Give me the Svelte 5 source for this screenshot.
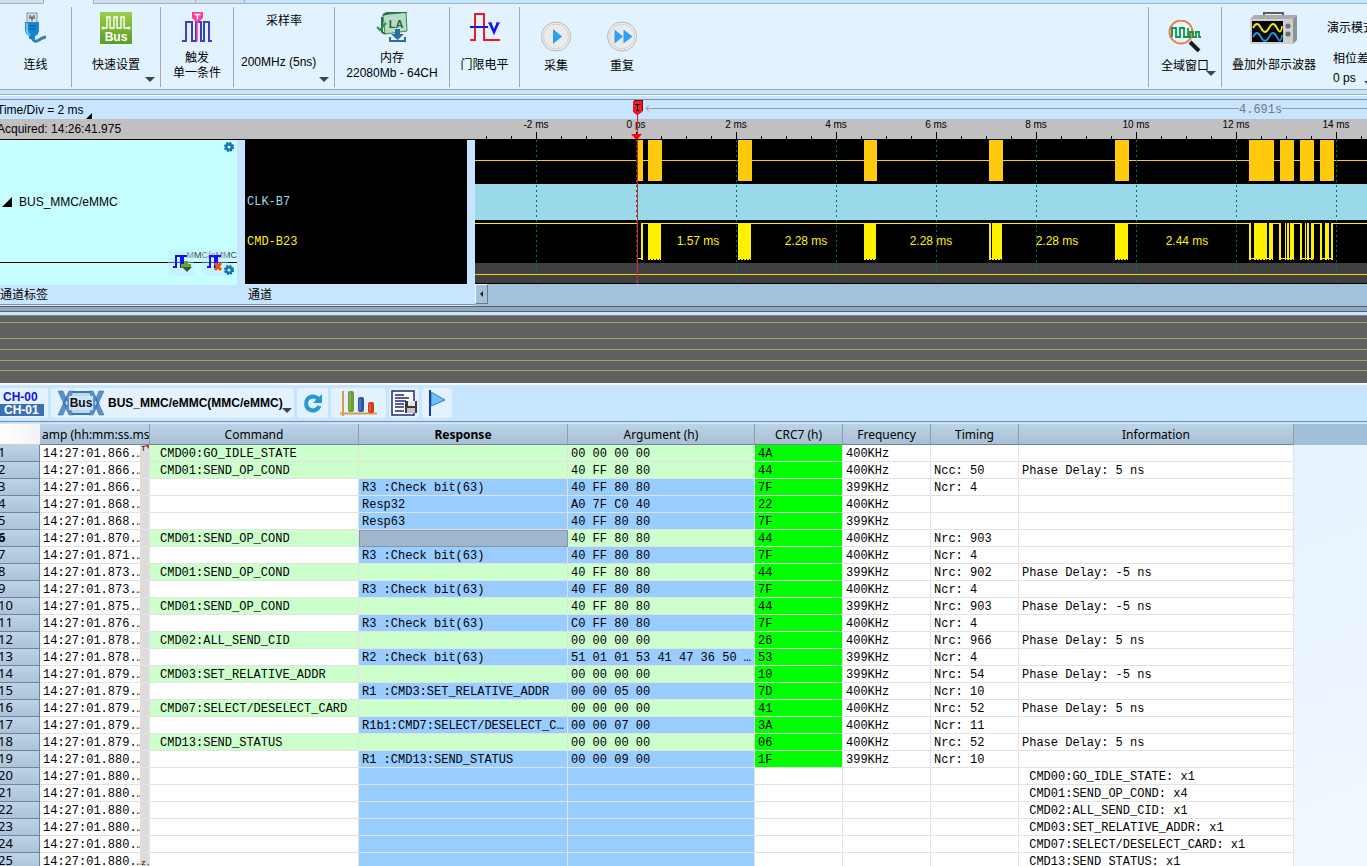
<script>
  /**
   * Logic analyzer main window: ribbon, waveform viewer, overview strip
   * and the MMC/eMMC protocol report.
   */

  const columns = ['Command', 'Response', 'Argument (h)', 'CRC7 (h)', 'Frequency', 'Timing', 'Information'];

  // [kind, ms, command, response, argument, crc, frequency, timing, info]
  const packets = [
    ['cmd', '866', 'CMD00:GO_IDLE_STATE', '', '00 00 00 00', '4A', '400KHz', '', ''],
    ['cmd', '866', 'CMD01:SEND_OP_COND', '', '40 FF 80 80', '44', '400KHz', 'Ncc: 50', 'Phase Delay: 5 ns'],
    ['resp', '866', '', 'R3 :Check bit(63)', '40 FF 80 80', '7F', '399KHz', 'Ncr: 4', ''],
    ['resp', '868', '', 'Resp32', 'A0 7F C0 40', '22', '400KHz', '', ''],
    ['resp', '868', '', 'Resp63', '40 FF 80 80', '7F', '399KHz', '', ''],
    ['cmd', '870', 'CMD01:SEND_OP_COND', '', '40 FF 80 80', '44', '400KHz', 'Nrc: 903', ''],
    ['resp', '871', '', 'R3 :Check bit(63)', '40 FF 80 80', '7F', '400KHz', 'Ncr: 4', ''],
    ['cmd', '873', 'CMD01:SEND_OP_COND', '', '40 FF 80 80', '44', '399KHz', 'Nrc: 902', 'Phase Delay: -5 ns'],
    ['resp', '873', '', 'R3 :Check bit(63)', '40 FF 80 80', '7F', '400KHz', 'Ncr: 4', ''],
    ['cmd', '875', 'CMD01:SEND_OP_COND', '', '40 FF 80 80', '44', '399KHz', 'Nrc: 903', 'Phase Delay: -5 ns'],
    ['resp', '876', '', 'R3 :Check bit(63)', 'C0 FF 80 80', '7F', '400KHz', 'Ncr: 4', ''],
    ['cmd', '878', 'CMD02:ALL_SEND_CID', '', '00 00 00 00', '26', '400KHz', 'Nrc: 966', 'Phase Delay: 5 ns'],
    ['resp', '878', '', 'R2 :Check bit(63)', '51 01 01 53 41 47 36 50 …', '53', '399KHz', 'Ncr: 4', ''],
    ['cmd', '879', 'CMD03:SET_RELATIVE_ADDR', '', '00 00 00 00', '10', '399KHz', 'Nrc: 54', 'Phase Delay: -5 ns'],
    ['resp', '879', '', 'R1 :CMD3:SET_RELATIVE_ADDR', '00 00 05 00', '7D', '400KHz', 'Ncr: 10', ''],
    ['cmd', '879', 'CMD07:SELECT/DESELECT_CARD', '', '00 00 00 00', '41', '400KHz', 'Nrc: 52', 'Phase Delay: 5 ns'],
    ['resp', '879', '', 'R1b1:CMD7:SELECT/DESELECT_C…', '00 00 07 00', '3A', '400KHz', 'Ncr: 11', ''],
    ['cmd', '879', 'CMD13:SEND_STATUS', '', '00 00 00 00', '06', '400KHz', 'Nrc: 52', 'Phase Delay: 5 ns'],
    ['resp', '880', '', 'R1 :CMD13:SEND_STATUS', '00 00 09 00', '1F', '399KHz', 'Ncr: 10', ''],
    ['sum', '880', '', '', '', '', '', '', ' CMD00:GO_IDLE_STATE: x1'],
    ['sum', '880', '', '', '', '', '', '', ' CMD01:SEND_OP_COND: x4'],
    ['sum', '880', '', '', '', '', '', '', ' CMD02:ALL_SEND_CID: x1'],
    ['sum', '880', '', '', '', '', '', '', ' CMD03:SET_RELATIVE_ADDR: x1'],
    ['sum', '880', '', '', '', '', '', '', ' CMD07:SELECT/DESELECT_CARD: x1'],
    ['sum', '880', '', '', '', '', '', '', ' CMD13:SEND_STATUS: x1']
  ];

  let selectedRow = $state(6);

  // waveform canvas: 50px per ms, trigger at ORIGIN
  const ORIGIN = 161;
  const majors = [-1, 0, 1, 2, 3, 4, 5, 6, 7].map((n) => ({
    x: ORIGIN + n * 100,
    label: n === 0 ? '0 ps' : `${n * 2} ms`
  }));
  const minors = Array.from({ length: 36 }, (_, i) => 11 + i * 25);

  const busBlocks = [[162, 6], [173, 14], [263, 14], [389, 13], [514, 14], [640, 14], [774, 25], [805, 14], [825, 14], [845, 14]];
  const cmdBlocks = [
    [166, 2], [173, 13], [263, 13], [389, 12], [514, 2], [517, 10], [640, 13],
    [774, 2], [779, 13], [794, 4],
    [804, 2], [810, 1], [812, 2], [815, 4],
    [825, 2], [830, 1], [832, 2], [836, 3],
    [845, 2], [850, 4], [856, 2]
  ];
  const cmdLow = [[162, 6], [514, 13], [774, 24], [804, 15], [825, 14], [845, 13]];
  const cmdHigh = [[0, 162], [166, 348], [517, 257], [798, 6], [819, 6], [839, 6], [858, 2000]];
  const gaps = [[223, '1.57 ms'], [331, '2.28 ms'], [456, '2.28 ms'], [582, '2.28 ms'], [712, '2.44 ms']];
  const overview = [6, 22, 33, 44, 54];
</script>

{#snippet gear()}
  <svg width="10" height="10" viewBox="0 0 10 10" aria-hidden="true">
    <circle cx="5" cy="5" r="4" fill="none" stroke="#0a62a8" stroke-width="2" stroke-dasharray="2 1.14" />
    <circle cx="5" cy="5" r="2.6" fill="#c6ffff" stroke="#1272b8" stroke-width="2.2" />
  </svg>
{/snippet}

<div class="window">
  <div class="tabs">
    <span class="tab first"></span>
    <span class="tab active"></span>
    <span class="tab wide"></span>
    <span class="tab last"></span>
  </div>

  <header class="ribbon">
    <button class="item w72">
      <svg width="32" height="32" viewBox="0 0 32 32" aria-hidden="true">
        <rect x="7" y="1" width="10" height="10" fill="#d9dde3" stroke="#8b93a0" />
        <path d="M10 3v3M14 3v3M9 6h6M12 4v5" stroke="#4a5058" />
        <path d="M5 10h14v7q0 6-4 7v3H9v-3q-4-2-4-7z" fill="#1787cf" />
        <path d="M7 11v7q0 4 3 5" fill="none" stroke="#6ec4f2" stroke-width="2" />
        <path d="M9 14h7M9 17h7" stroke="#0a5c98" />
        <path d="M12 26q2 5 7 2t7-3" fill="none" stroke="#2f7fb8" stroke-width="3" />
      </svg>
      <span class="label">连线</span>
    </button>
    <button class="item w89">
      <svg width="32" height="32" viewBox="0 0 32 32" aria-hidden="true">
        <defs>
          <linearGradient id="busGreen" x1="0" y1="0" x2="0" y2="1">
            <stop offset="0" stop-color="#9ccf4b" />
            <stop offset="1" stop-color="#5c9d1f" />
          </linearGradient>
        </defs>
        <rect width="32" height="32" rx="1" fill="url(#busGreen)" />
        <path d="M2 16h5V5h3v11h4V5h3v11h4V5h3v11h6" fill="none" stroke="#fff" stroke-width="1.4" />
        <circle cx="3" cy="16" r="1.4" fill="#fff" />
        <circle cx="29" cy="16" r="1.4" fill="#fff" />
        <text x="16" y="29" text-anchor="middle" class="ico-bold" font-size="12" fill="#fff">Bus</text>
      </svg>
      <span class="label">快速设置</span>
      <span class="caret"></span>
    </button>
    <button class="item w73">
      <svg width="32" height="32" viewBox="0 0 32 32" aria-hidden="true">
        <path d="M1 29h4V10h6v19h4V10h5v19h3V10h5v19h3" fill="none" stroke="#3b3fc4" stroke-width="2" />
        <path d="M16 8v21" stroke="#ff3c9c" stroke-width="1.5" />
        <path d="M11 0h11v6l-5.500 5L11 6z" fill="#ff3c9c" />
        <path d="M13.500 2.500h6M16.500 2.500v5" stroke="#fff" stroke-width="1.500" />
      </svg>
      <span class="label">触发<br />单一条件</span>
    </button>
    <div class="item w101 rate">
      <label for="sample-rate">采样率</label>
      <select id="sample-rate"><option>200MHz (5ns)</option></select>
      <span class="caret"></span>
    </div>
    <button class="item w115">
      <svg width="32" height="32" viewBox="0 0 32 32" aria-hidden="true">
        <path d="M7 3L30 0l1 19-22 3z" fill="#b9dcc4" stroke="#3c8a5a" />
        <path d="M7 3l4-2 20-1M6 5v15l3 2" fill="none" stroke="#276c44" stroke-width="2" />
        <path d="M1 15l3 3 6-7" fill="none" stroke="#1f9a3e" stroke-width="2" />
        <text x="20" y="16" text-anchor="middle" class="ico-bold" font-size="11" fill="#1d6b43">LA</text>
        <path d="M19 17h5v5h4l-6.500 6-6.500-6h4z" fill="#2e6e9c" />
        <path d="M14 25v4h15v-4" fill="none" stroke="#2e6e9c" stroke-width="2" />
      </svg>
      <span class="label">内存<br />22080Mb - 64CH</span>
    </button>
    <button class="item w70">
      <svg width="32" height="32" viewBox="0 0 32 32" aria-hidden="true">
        <path d="M1 28h5V2h9v26h16" fill="none" stroke="#f01818" stroke-width="2" />
        <path d="M1 15h18" stroke="#1010f0" stroke-width="2" />
        <path d="M21 11l4 9 4-9" fill="none" stroke="#1010f0" stroke-width="2.600" />
        <path d="M19 11h4M27 11h4" stroke="#1010f0" />
      </svg>
      <span class="label">门限电平</span>
    </button>
    <div class="runs">
      <button class="item low w66">
        <svg width="32" height="32" viewBox="0 0 32 32" aria-hidden="true">
          <circle cx="16" cy="16.500" r="14.500" fill="#f4f4f4" stroke="#b4b4b4" />
          <circle cx="16" cy="16.500" r="12.500" fill="#ebebeb" stroke="#cfcfcf" />
          <path d="M13 9l9 7.500-9 7.500z" fill="#2ba0f5" />
        </svg>
        <span class="label">采集</span>
      </button>
      <button class="item low w66">
        <svg width="32" height="32" viewBox="0 0 32 32" aria-hidden="true">
          <circle cx="16" cy="16.500" r="14.500" fill="#f4f4f4" stroke="#b4b4b4" />
          <circle cx="16" cy="16.500" r="12.500" fill="#ebebeb" stroke="#cfcfcf" />
          <path d="M8.500 9.500l8.500 7-8.500 7zM17.500 9.500l9 7-9 7z" fill="#2ba0f5" />
        </svg>
        <span class="label">重复</span>
      </button>
    </div>
    <button class="item low w73">
      <svg width="34" height="32" viewBox="0 0 34 32" aria-hidden="true">
        <circle cx="13" cy="12" r="11.500" fill="#e4f5fb" stroke="#e8804a" stroke-width="2" />
        <path d="M4 17V8h4v9h4V8h4v9h4V8M20 17h2v-5h3v5h3v-5h3v5h2" fill="none" stroke="#14934a" stroke-width="1.800" />
        <path d="M22 22l9 9" stroke="#1b1b1b" stroke-width="4" />
      </svg>
      <span class="label">全域窗口</span>
      <span class="caret high"></span>
    </button>
    <div class="extern">
      <button class="item w104">
        <svg width="50" height="32" viewBox="0 0 50 32" aria-hidden="true">
          <path d="M15 6V1h19v5" fill="none" stroke="#5a5f66" stroke-width="2" />
          <path d="M1 7l4-4h43l-4 4z" fill="#a9adb0" />
          <path d="M44 7l4-4v25l-4 4z" fill="#8f9396" />
          <rect x="1" y="7" width="43" height="25" fill="#cdd0d1" />
          <rect x="3" y="9" width="31" height="21" fill="#050505" />
          <path d="M4 16q4-8 8 0t8 0 8 0 5-2" fill="none" stroke="#f5e61a" stroke-width="1.800" />
          <path d="M4 25q4-8 8 0t8 0 8 0 5-2" fill="none" stroke="#2196e0" stroke-width="1.800" />
          <circle cx="39" cy="14" r="2.600" fill="#6c7175" />
          <circle cx="39" cy="22" r="2.600" fill="#6c7175" />
        </svg>
        <span class="label">叠加外部示波器</span>
      </button>
      <div class="phase">
        <span class="mode">演示模式</span>
        <label for="phase-diff">相位差</label>
        <select id="phase-diff"><option>0 ps</option></select>
        <span class="caret"></span>
      </div>
    </div>
  </header>
  <div class="ribbon-edge"></div>

  <section class="viewer">
    <div class="timehead">
      <button class="timediv">Time/Div = 2 ms<span class="corner"></span></button>
      <div class="acquired">Acquired: 14:26:41.975</div>
      <svg class="ruler" width="100%" height="40" aria-hidden="true">
        <path d="M2000 8.500H171M174 5.500l-3 3 3 3" fill="none" stroke="#9a9a9a" />
        <rect x="764" y="2" width="43" height="14" fill="#c7e5ff" />
        <text x="764" y="13" class="mono" fill="#777">4.691s</text>
        {#each minors as x}
          <rect {x} y="36" width="1" height="4" />
        {/each}
        {#each majors as m}
          <rect x={m.x} y="32" width="1" height="8" />
          <text x={m.x} y="28" text-anchor="middle" class="tick">{m.label}</text>
        {/each}
        <path d="M159 0h9v11l-5 3h-3z" fill="#7d0a0a" />
        <path d="M158 1h9v11l-4 3h-1l-4-3z" fill="#ed1c24" />
        <path d="M160 4.500h5M162.500 4v7M161 10.500h3" stroke="#000" fill="none" />
        <rect x="162" y="14" width="1" height="26" fill="#ed1c24" />
        <path d="M156 34h11l-5.500 6z" fill="#ff0000" />
        <rect y="39" width="100%" height="1" />
      </svg>
    </div>

    <div class="lanes">
      <div class="names">
        <div class="bus-name">
          <span class="tri"></span>BUS_MMC/eMMC
          <span class="gear g1">{@render gear()}</span>
        </div>
        <span class="type">MMC/eMMC</span>
        <button class="chip c1" aria-label="Add trigger">
          <svg width="26" height="26" viewBox="0 0 26 26" aria-hidden="true">
            <path d="M5 17h3V6h5v11h2V6h4" fill="none" stroke="#1010f0" stroke-width="2" />
            <path d="M13 14h3v-3h4v3h3v4H13z" fill="#6ba51e" />
            <path d="M14 17h10l-5 5z" fill="#3c5348" />
          </svg>
        </button>
        <button class="chip c2" aria-label="Remove trigger">
          <svg width="26" height="26" viewBox="0 0 26 26" aria-hidden="true">
            <path d="M5 17h3V6h5v11h2V6h4" fill="none" stroke="#1010f0" stroke-width="2" />
            <path d="M13 13l6 7M19 13l-6 7" stroke="#f0501c" stroke-width="3" />
          </svg>
        </button>
        <span class="gear g2">{@render gear()}</span>
      </div>
      <div class="split"></div>
      <div class="channels">
        <span class="clk">CLK-B7</span>
        <span class="cmd-ch">CMD-B23</span>
      </div>
      <div class="split"></div>
      <svg class="waves" width="100%" height="144" aria-hidden="true">
        <rect y="20" width="100%" height="1" fill="#ffc90e" />
        <rect y="44" width="100%" height="36" fill="#9ad9ea" />
        <rect y="123" width="100%" height="20" fill="#404040" />
        <rect y="134" width="100%" height="1" fill="#ffc90e" />
        {#each busBlocks as [x, w]}
          <rect {x} width={w} height="41" fill="#ffc90e" />
        {/each}
        {#each cmdHigh as [x, w]}
          <rect {x} y="83" width={w} height="1" fill="#fff200" />
        {/each}
        {#each cmdLow as [x, w]}
          <rect {x} y="118" width={w} height="1" fill="#fff200" />
        {/each}
        {#each cmdBlocks as [x, w]}
          <rect {x} y="83" width={w} height="36" fill="#fff200" />
          <path d="M{x} 119.500h{w}" stroke="#fff200" stroke-dasharray="2 1" />
        {/each}
        {#each gaps as [x, text]}
          <text {x} y="105" text-anchor="middle" class="gap">{text}</text>
        {/each}
        {#each majors as m}
          <path d="M{m.x + 0.5} 0v143" stroke="#007070" stroke-dasharray="2 3" />
        {/each}
        <rect x="162" width="1" height="144" fill="#ed1c24" />
      </svg>
    </div>

    <div class="footer">
      <span>通道标签</span>
      <span>通道</span>
      <div class="scroll"><button aria-label="Scroll left"><span></span></button></div>
    </div>
  </section>

  <div class="sash"></div>

  <svg class="overview" width="100%" height="67" aria-hidden="true">
    {#each overview as y}
      <rect {y} width="100%" height="1" fill="#a0aa62" />
    {/each}
  </svg>

  <div class="toolbar">
    <button class="tool w48" aria-label="Channels">
      <svg width="48" height="30" viewBox="0 0 48 30" aria-hidden="true">
        <rect y="16" width="44" height="12" fill="#3c70b4" />
        <text x="3" y="13" class="ico-bold" font-size="12" fill="#1414dc">CH-00</text>
        <text x="4" y="26" class="ico-bold" font-size="12" fill="#fff">CH-01</text>
      </svg>
    </button>
    <div class="tool picker">
      <svg width="48" height="30" viewBox="0 0 48 30" aria-hidden="true">
        <path d="M13 4h22l6 11-6 11H13L7 15z" fill="#b9d6f2" stroke="#3a76b8" stroke-width="2" />
        <path d="M1 3h5l10 24h-4zM1 27h5L16 3h-4zM47 3h-5L32 27h4zM47 27h-5L32 3h4z" fill="#5b92cc" stroke="#2f66a4" stroke-width=".5" />
        <rect x="12" y="8" width="24" height="14" fill="#cfe4f7" />
        <text x="24" y="19" text-anchor="middle" class="ico-bold" font-size="12" fill="#101010">Bus</text>
      </svg>
      <select aria-label="Bus"><option>BUS_MMC/eMMC(MMC/eMMC)</option></select>
      <span class="caret"></span>
    </div>
    <button class="tool w31" aria-label="Refresh">
      <svg width="22" height="22" viewBox="0 0 22 22" aria-hidden="true">
        <path d="M16 6.500A7 7 0 1 0 17.500 14" fill="none" stroke="#2599d8" stroke-width="4" />
        <path d="M20 2v9h-9z" fill="#2599d8" />
      </svg>
    </button>
    <button class="tool w55" aria-label="Statistics">
      <svg width="40" height="26" viewBox="0 0 40 26" aria-hidden="true">
        <path d="M4 1v25M1 23.500h37" stroke="#d99a4a" stroke-width="2" />
        <rect x="9" y="1" width="6" height="21" rx="2" fill="#6e9c2c" />
        <rect x="19" y="7" width="6" height="15" rx="2" fill="#2a56a8" />
        <rect x="29" y="12" width="6" height="11" rx="2" fill="#d23a14" />
        <path d="M11 3v17M21 9v11M31 14v7" stroke="#fff" stroke-opacity=".4" />
      </svg>
    </button>
    <button class="tool w30" aria-label="Save report">
      <svg width="28" height="28" viewBox="0 0 28 28" aria-hidden="true">
        <rect x="2" y="2" width="22" height="24" fill="#fff" stroke="#1e2a78" stroke-width="1.500" />
        <path d="M5 6h9M5 9h14M5 12h11M5 15h9M5 18h9M5 22h9" stroke="#1e2a78" stroke-width="1.500" />
        <rect x="15" y="12" width="12" height="12" fill="#3a3a3a" />
        <rect x="18" y="12" width="7" height="5" fill="#e4e4e4" />
        <rect x="17" y="19" width="8" height="5" fill="#c4c4c4" />
      </svg>
    </button>
    <button class="tool w30" aria-label="Flag">
      <svg width="18" height="26" viewBox="0 0 18 26" aria-hidden="true">
        <path d="M3 2l14 8-14 6z" fill="#6cc2f8" stroke="#2f7fd0" />
        <path d="M2 0v26" stroke="#1a3a9c" stroke-width="2" />
      </svg>
    </button>
  </div>

  <main class="report">
    <table>
      <colgroup>
        <col class="c40" /><col class="c100" /><col class="c10" />
        <col class="c209" /><col class="c209" /><col class="c187" />
        <col class="c88" /><col class="c88" /><col class="c88" />
        <col class="c275" /><col />
      </colgroup>
      <thead>
        <tr>
          <td class="origin"></td>
          <th class="stamp" colspan="2">amp (hh:mm:ss.ms</th>
          {#each columns as name}
            <th class:current={name === 'Response'}>{name}</th>
          {/each}
          <td class="blank-head"></td>
        </tr>
      </thead>
      <tbody>
        {#each packets as [kind, ms, command, response, argument, crc, freq, timing, info], i}
          <tr class={kind} onclick={() => (selectedRow = i + 1)}>
            <th class:current={selectedRow === i + 1}>{i + 1}</th>
            <td class="time">14:27:01.{ms}.…</td>
            <td class="mark">
              {#if i === 0}<span class="flag">T</span>{/if}
              {#if i === 24}<span class="zoom">z.</span>{/if}
            </td>
            <td class="command">{command}</td>
            <td class="response" class:selected={selectedRow === i + 1}>{response}</td>
            <td class="argument">{argument}</td>
            <td class="crc">{crc}</td>
            <td>{freq}</td>
            <td>{timing}</td>
            <td>{info}</td>
            <td class="blank"></td>
          </tr>
        {/each}
      </tbody>
    </table>
  </main>
</div>

<style>
  :global(body) {
    margin: 0;
    background: #c7e5ff;
  }

  .window {
    display: flex;
    flex-direction: column;
    height: 100vh;
    overflow: hidden;
    background: #c7e5ff;
    color: #000;
    font: 12px/15px 'Liberation Sans', 'Noto Sans CJK SC', sans-serif;
  }

  .window > * {
    flex: none;
  }

  button,
  select {
    margin: 0;
    padding: 0;
    border: 0;
    border-radius: 0;
    background: none;
    color: inherit;
    font: inherit;
    appearance: none;
  }

  svg {
    display: block;
    flex: none;
  }

  .ico-bold {
    font-family: 'Liberation Sans', sans-serif;
    font-weight: 700;
  }

  .mono,
  .channels,
  tbody td {
    font-family: 'Liberation Mono', monospace;
    font-size: 12px;
  }

  .caret {
    position: absolute;
    right: 5px;
    bottom: 5px;
    border: 5px solid transparent;
    border-top-color: #404448;
    border-bottom: 0;
    pointer-events: none;
  }

  /* ribbon */
  .tabs {
    display: flex;
    height: 3px;
    border-bottom: 1px solid #9fb4ca;
  }

  .tab {
    box-sizing: border-box;
    height: 4px;
    border-right: 1px solid #9fb4ca;
    border-bottom: 1px solid #9fb4ca;
    background: #d0dfeb;
  }

  .tab.first {
    width: 44px;
  }

  .tab.active {
    width: 50px;
    border-bottom: 0;
    background: #e2f2ff;
  }

  .tab.wide {
    width: 102px;
  }

  .tab.last {
    width: 49px;
  }

  .ribbon {
    display: flex;
    height: 85px;
    background: #e2f2ff;
    border-bottom: 1px solid #96a9bd;
    overflow: hidden;
  }

  .item {
    position: relative;
    display: flex;
    flex: none;
    flex-direction: column;
    align-items: center;
    box-sizing: border-box;
    height: 80px;
    margin-top: 3px;
    padding-top: 5px;
    border-right: 1px solid #a2a8ae;
    white-space: nowrap;
  }

  .item .label {
    display: flex;
    align-items: center;
    height: 43px;
    text-align: center;
  }

  .item.low {
    padding-top: 13px;
  }

  .item.low .label {
    height: 28px;
  }

  .runs {
    display: flex;
    flex: 1;
    height: 80px;
    margin-top: 3px;
    padding-left: 3px;
    border-right: 1px solid #a2a8ae;
  }

  .runs .item,
  .extern .item {
    border-right: 0;
  }

  .runs .item {
    margin-top: 0;
  }

  .caret.high {
    bottom: 11px;
  }

  .w66 { width: 66px; }
  .w70 { width: 70px; }
  .w72 { width: 72px; }
  .w73 { width: 73px; }
  .w89 { width: 89px; }
  .w101 { width: 101px; }
  .w104 { width: 104px; }
  .w115 { width: 115px; }

  .rate {
    gap: 25px;
    padding-top: 7px;
  }

  .rate select {
    width: 86px;
    height: 16px;
  }

  .extern {
    display: flex;
    flex: none;
    width: 145px;
    overflow: hidden;
  }

  .phase {
    position: relative;
    display: flex;
    flex: none;
    flex-direction: column;
    width: 52px;
    height: 82px;
    padding: 17px 0 0 7px;
    box-sizing: border-box;
    white-space: nowrap;
  }

  .phase .mode {
    margin: 0 0 16px -6px;
  }

  .phase label {
    margin-bottom: 4px;
  }

  .phase .caret {
    right: 4px;
    bottom: 0;
  }

  .ribbon-edge {
    height: 4px;
    border-bottom: 1px solid #9ab0c6;
    box-shadow: 0 1px #f2faff;
    margin-bottom: 4px;
  }

  /* waveform viewer */
  .viewer {
    border-top: 1px solid #8c9092;
    border-bottom: 1px solid #8c9092;
  }

  .timehead {
    display: grid;
    grid-template: 19px 21px / 475px 1fr;
    height: 40px;
  }

  .timediv {
    grid-area: 1 / 1;
    display: flex;
    align-items: flex-end;
    gap: 2px;
    text-indent: -3px;
    line-height: 17px;
  }

  .corner {
    border: 3px solid #000;
    border-top-color: transparent;
    border-left-color: transparent;
  }

  .acquired {
    grid-area: 2 / 1 / 3 / 3;
    background: #c0c0c0;
    border-bottom: 1px solid #000;
    text-indent: -3px;
    line-height: 21px;
  }

  .ruler {
    grid-area: 1 / 2 / 3 / 3;
    z-index: 1;
  }

  .tick {
    font-size: 10px;
  }

  .lanes {
    display: grid;
    grid-template: 144px / 237px 8px 222px 8px 1fr;
  }

  .names {
    position: relative;
    height: 145px;
    background: #c6ffff;
  }

  .bus-name {
    display: flex;
    align-items: center;
    gap: 7px;
    box-sizing: border-box;
    height: 123px;
    padding: 2px 0 0 2px;
    border-bottom: 1px solid #000;
  }

  .tri {
    border: 5px solid #000;
    border-top-color: transparent;
    border-left-color: transparent;
  }

  .gear {
    position: absolute;
    right: 3px;
  }

  .g1 {
    top: 2px;
  }

  .g2 {
    bottom: 10px;
  }

  .type {
    position: absolute;
    right: 0;
    top: 108px;
    color: #444;
    font-size: 9px;
  }

  .chip {
    position: absolute;
    top: 110px;
    width: 26px;
    height: 26px;
    border-radius: 3px;
    background: #c7e5ff66;
  }

  .c1 {
    left: 168px;
  }

  .c2 {
    left: 202px;
  }

  .channels {
    display: flex;
    flex-direction: column;
    gap: 25px;
    padding: 55px 0 0 2px;
    background: #000;
  }

  .clk {
    color: #9ad9ea;
  }

  .cmd-ch {
    color: #fff200;
  }

  .waves {
    background: #000;
  }

  .gap {
    fill: #fff200;
  }

  .footer {
    display: grid;
    grid-template-columns: 248px 227px 1fr;
    height: 20px;
    line-height: 23px;
  }

  .scroll {
    background: #a3c1db;
  }

  .scroll button {
    display: flex;
    align-items: center;
    justify-content: center;
    box-sizing: border-box;
    width: 13px;
    height: 20px;
    border: 1px solid #f0f6fb;
    border-right-color: #777;
    border-bottom-color: #777;
    background: #a3c1db;
  }

  .scroll span {
    border: 3px solid transparent;
    border-right-color: #222;
    border-left: 0;
  }

  .sash {
    height: 4px;
    margin: 1px 0 3px;
    border-top: 1px solid #55606a;
    border-bottom: 1px solid #55606a;
    background: #8fa9be;
  }

  .overview {
    border-top: 1px solid #86898c;
    border-bottom: 2px solid #f4faff;
    background: #606060;
  }

  /* protocol report */
  .toolbar {
    display: flex;
    gap: 3px;
    padding: 3px 0;
    border-bottom: 1px solid #7d8c9b;
  }

  .tool {
    position: relative;
    display: flex;
    align-items: center;
    justify-content: center;
    height: 30px;
    border-radius: 3px;
    background: #e2f2ff;
  }

  .picker {
    justify-content: flex-start;
    gap: 3px;
    width: 237px;
    padding-left: 6px;
  }

  .picker select {
    height: 30px;
    font-weight: 700;
  }

  .picker .caret {
    right: 2px;
  }

  .w30 { width: 30px; }
  .w31 { width: 31px; }
  .w48 { width: 48px; }
  .w55 { width: 55px; }

  .window > .report {
    flex: 1 1 0;
    min-height: 0;
    margin-top: 2px;
    overflow: hidden;
    background: linear-gradient(160deg, #d8ecff, #f2f8ff);
  }

  table {
    width: 100%;
    border-spacing: 0;
    table-layout: fixed;
  }

  .c10 { width: 10px; }
  .c40 { width: 40px; }
  .c88 { width: 88px; }
  .c100 { width: 100px; }
  .c187 { width: 187px; }
  .c209 { width: 209px; }
  .c275 { width: 275px; }

  th,
  td {
    box-sizing: border-box;
    padding: 0;
    overflow: hidden;
    white-space: pre;
  }

  th {
    font-family: 'Noto Sans', sans-serif;
    font-weight: 400;
  }

  th.current {
    font-weight: 700;
  }

  thead th,
  thead td {
    height: 21px;
    padding-top: 2px;
    border-right: 1px solid #8b9fb2;
    border-bottom: 1px solid #6f859b;
    background: linear-gradient(#bcd4e8, #a9c0d4);
    line-height: 18px;
  }

  thead .stamp {
    padding-left: 2px;
    text-align: left;
  }

  thead .origin {
    border-right: 0;
    border-bottom-color: #d0d0d0;
    background: linear-gradient(90deg, #fff, #f2f2f2);
  }

  thead .blank-head {
    border: 0;
    background: #a1c0da;
  }

  tbody th {
    height: 17px;
    padding-bottom: 2px;
    border-right: 1px solid #6f859b;
    border-bottom: 1px solid #6f859b;
    background: linear-gradient(#bcd4e8, #adc3d7);
    font-size: 13px;
    line-height: 14px;
    text-align: left;
    text-indent: -2px;
  }

  tbody td {
    height: 17px;
    padding: 3px 0 0 3px;
    border-right: 1px solid #e2e2e2;
    border-bottom: 1px solid #e2e2e2;
    background: #fff;
    line-height: 13px;
  }

  tbody .time {
    border-right: 0;
  }

  tbody .mark {
    position: relative;
    padding: 0;
    background: #dcdcdc;
  }

  .flag,
  .zoom {
    position: absolute;
    top: 0;
    left: 1px;
    font-size: 8px;
    line-height: 8px;
  }

  .flag::after {
    content: '';
    position: absolute;
    top: 0;
    left: 4px;
    border: 2px solid #ed1c24;
    border-left-color: transparent;
    border-bottom-color: transparent;
  }

  .zoom {
    top: 6px;
  }

  tbody .command {
    padding-left: 10px;
  }

  .cmd .command,
  .cmd .response,
  .cmd .argument {
    background: #ccffcc;
  }

  .resp .response,
  .resp .argument,
  .sum .response,
  .sum .argument {
    background: #99ccff;
  }

  .cmd .crc,
  .resp .crc {
    background: #00ff00;
  }

  tbody .response.selected {
    padding: 0;
    border: 1px solid #8396aa;
    background: #9fb6cc;
  }

  tbody .blank {
    border: 0;
    background: none;
  }
</style>
